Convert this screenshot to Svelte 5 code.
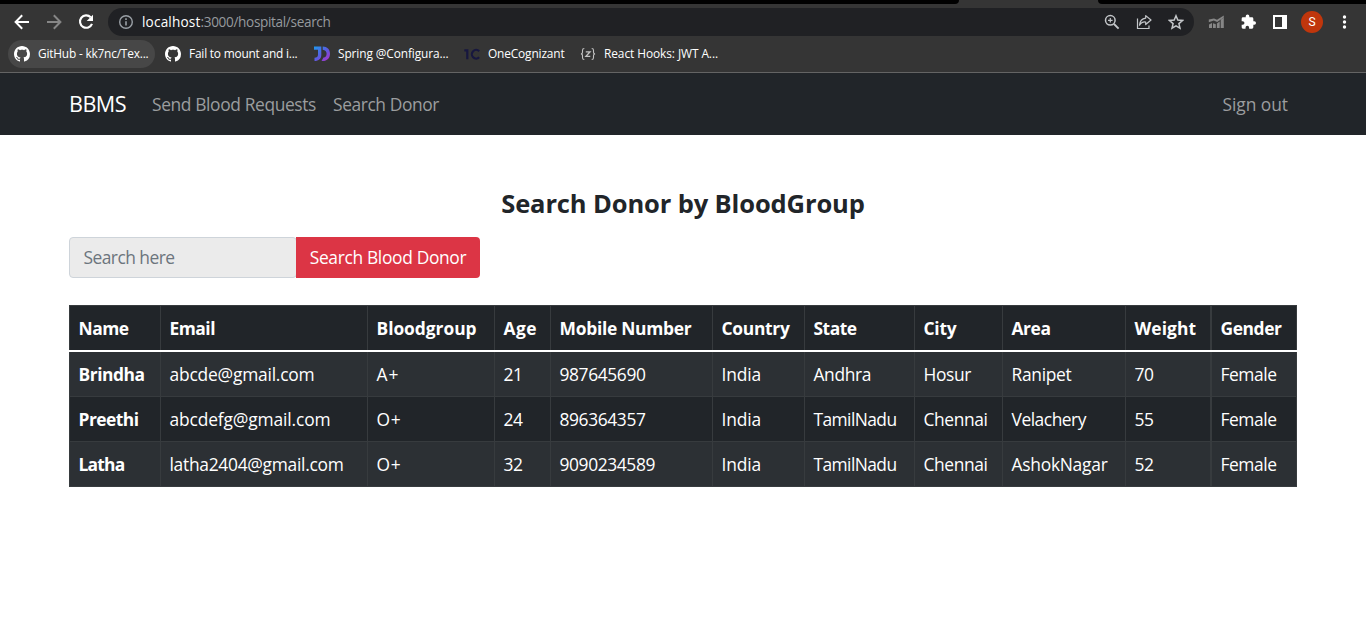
<script>
  // Spreads a label over a given advance width through its letter spacing.
  function fit(node, width) {
    const natural = node.getBoundingClientRect().width;
    node.style.letterSpacing = `${(width - natural) / node.textContent.length}px`;
  }

  const bookmarks = [
    { icon: 'github', label: 'GitHub - kk7nc/Tex...', text: 110.5, width: 147, active: true },
    { icon: 'github', label: 'Fail to mount and i...', text: 108.5, width: 145 },
    { icon: 'jd', label: 'Spring @Configura...', text: 110.5, width: 146 },
    { icon: 'one', label: 'OneCognizant', text: 76.5, width: 112 },
    { icon: 'braces', label: 'React Hooks: JWT A...', text: 114, width: 152 },
  ];

  const columns = [
    { label: 'Name', text: 50, width: 92 },
    { label: 'Email', text: 45.5, width: 207 },
    { label: 'Bloodgroup', text: 100, width: 127 },
    { label: 'Age', text: 33.5, width: 56 },
    { label: 'Mobile Number', text: 132, width: 162 },
    { label: 'Country', text: 68, width: 92 },
    { label: 'State', text: 43, width: 110 },
    { label: 'City', text: 33, width: 88 },
    { label: 'Area', text: 39, width: 123 },
    { label: 'Weight', text: 61.5, width: 86 },
    { label: 'Gender', text: 61, width: 85 },
  ];

  const donors = [
    [['Brindha', 66], ['abcde@gmail.com', 145], ['A+', 23], ['21', 19], ['987645690', 86], ['India', 39.5], ['Andhra', 57.5], ['Hosur', 47.5], ['Ranipet', 60], ['70', 19], ['Female', 56]],
    [['Preethi', 60], ['abcdefg@gmail.com', 161], ['O+', 25], ['24', 19], ['896364357', 86], ['India', 39.5], ['TamilNadu', 83], ['Chennai', 64], ['Velachery', 74.5], ['55', 19], ['Female', 56]],
    [['Latha', 46], ['latha2404@gmail.com', 174], ['O+', 25], ['32', 19], ['9090234589', 95.5], ['India', 39.5], ['TamilNadu', 83], ['Chennai', 64], ['AshokNagar', 96], ['52', 19], ['Female', 56]],
  ];
</script>

<div class="browser">
  <div class="tabstrip"><i class="left"></i><i class="right"></i></div>
  <div class="toolbar">
    <div class="nav-buttons">
      <svg width="16" height="16" viewBox="0 0 16 16" fill="none" stroke="#fff" stroke-width="2"><path d="M15 8H2.2M8.2 1.3L1.6 8l6.6 6.7" /></svg>
      <svg width="16" height="16" viewBox="0 0 16 16" fill="none" stroke="#868686" stroke-width="2"><path d="M1 8h12.8M7.8 1.3L14.4 8l-6.6 6.7" /></svg>
      <svg width="16" height="16" viewBox="0 0 16 16"><path d="M12.7 3.3A6.2 6.2 0 1 0 14 9.8" fill="none" stroke="#fff" stroke-width="2.1" /><path d="M15 .8v6.3H8.7z" fill="#fff" /></svg>
    </div>
    <div class="omnibox">
      <svg width="16" height="16" viewBox="0 0 16 16" fill="none" stroke="#9aa0a6" stroke-width="1.4"><circle cx="8" cy="8" r="6.3" /><path d="M8 7.2v4.2M8 4.3v1.6" stroke-width="1.6" /></svg>
      <div class="url"><span class="host" use:fit={58.5}>localhost</span><span use:fit={130}>:3000/hospital/search</span></div>
      <div class="page-actions">
        <svg width="16" height="16" viewBox="0 0 16 16" fill="none" stroke="#c4c7ca" stroke-width="1.5"><circle cx="6.3" cy="6.3" r="4.8" /><path d="M10 10l4.6 4.6" stroke-width="1.9" /><path d="M6.3 4v4.6M4 6.3h4.6" stroke-width="1.2" /></svg>
        <svg width="16" height="16" viewBox="0 0 16 16" fill="none" stroke="#c4c7ca" stroke-width="1.2"><path d="M1.500 4.500v10h11.500V11.600" /><path d="M9.700 1.600L15 6l-5.300 4.500V8C7 7.800 4.800 8.800 3.500 11.200 3.800 7.400 6 4.600 9.700 4.100z" stroke-linejoin="round" /></svg>
        <svg width="16" height="16" viewBox="0 0 16 16" fill="none" stroke="#c4c7ca" stroke-width="1.5"><path d="M8 1.8l1.8 4.3 4.7.4-3.6 3.1 1.1 4.6L8 11.8l-4 2.4 1.1-4.6-3.6-3.1 4.7-.4z" /></svg>
      </div>
    </div>
    <div class="extensions">
      <svg width="16" height="16" viewBox="0 0 16 16" fill="#868686"><path d="M1 10.500l3-1.500v5H1zM5 9.300l2.800 1V14H5zM8.900 9.500l2.800-2V14H8.900zM12.700 5.800L15.800 3.500V14h-3.100z" /><path d="M.8 8.300V5.600L6 4.400l3 1.400 6.800-4.400v2L9.200 8 5.800 6.600z" /></svg>
      <svg width="16" height="16" viewBox="0 0 24 24" fill="#fff"><path d="M21.5 11H20V7a2 2 0 0 0-2-2h-4V3.500a2.700 2.700 0 0 0-5.400 0V5H4.500a2 2 0 0 0-2 2v3.800H4a2.700 2.700 0 0 1 0 5.400H2.500V20a2 2 0 0 0 2 2h3.800v-1.500a2.700 2.700 0 0 1 5.400 0V22H18a2 2 0 0 0 2-2v-4h1.500a2.500 2.500 0 0 0 0-5z" /></svg>
      <svg width="16" height="16" viewBox="0 0 16 16"><path fill="#fff" fill-rule="evenodd" d="M1 1h14v14H1zM3 3v10h7V3z" /></svg>
      <span class="avatar">S</span>
      <svg width="16" height="16" viewBox="0 0 16 16" fill="#fff"><circle cx="8.500" cy="3" r="1.700" /><circle cx="8.500" cy="8" r="1.700" /><circle cx="8.500" cy="13" r="1.700" /></svg>
    </div>
  </div>
  <div class="bookmarks">
    {#each bookmarks as b}
      <div class="bookmark" class:active={b.active} style:width="{b.width}px">
        {#if b.icon === 'github'}
          <svg width="16" height="16" viewBox="0 0 16 16" fill="#fff"><path d="M8 0C3.580 0 0 3.580 0 8c0 3.540 2.290 6.530 5.470 7.590.4.070.550-.170.550-.380 0-.190-.010-.820-.010-1.490-2.010.370-2.530-.490-2.690-.940-.090-.230-.480-.940-.820-1.130-.280-.150-.680-.520-.010-.530.630-.010 1.080.580 1.230.820.720 1.210 1.870.870 2.330.660.070-.520.280-.870.510-1.070-1.780-.2-3.640-.890-3.640-3.950 0-.870.310-1.590.820-2.150-.080-.2-.360-1.020.080-2.120 0 0 .670-.210 2.200.820.640-.180 1.320-.270 2-.270s1.360.090 2 .270c1.530-1.040 2.200-.820 2.200-.820.440 1.100.160 1.920.080 2.120.510.560.820 1.270.820 2.150 0 3.070-1.870 3.750-3.650 3.950.290.250.540.730.540 1.480 0 1.070-.010 1.930-.010 2.200 0 .210.150.460.550.380A8.010 8.010 0 0 0 16 8c0-4.420-3.580-8-8-8z" /></svg>
        {:else if b.icon === 'jd'}
          <svg width="16" height="16" viewBox="0 0 16 16">
            <defs><linearGradient id="jd" x1="0" y1="0" x2="1" y2="1"><stop offset="0" stop-color="#1d9bf0" /><stop offset=".5" stop-color="#5a5ce0" /><stop offset="1" stop-color="#b32fc4" /></linearGradient></defs>
            <path fill="url(#jd)" d="M0 .5h7.300v8.500c0 3.500-2.500 6-6.800 6v-3.200c2.300 0 3.500-1 3.500-3V3.700H0zM8.700.5c4.500 0 7.300 3 7.300 7.200S13.200 15 8.700 15H7.500l2-3.400c2-.3 3.100-1.700 3.100-3.900s-1.300-3.700-3.900-3.900z" />
          </svg>
        {:else if b.icon === 'one'}
          <svg width="16" height="16" viewBox="0 0 16 16" fill="none" stroke="#17173f" stroke-width="2.200"><path d="M.3 4.300h3V13.200" /><path d="M15.200 5.200A4.300 4.300 0 1 0 15.200 11.300" /></svg>
        {:else}
          <svg width="16" height="16" viewBox="0 0 16 16" fill="none" stroke="#c2c2c2" stroke-width="1.100"><path d="M4.300 2.500C2.700 2.500 2.500 3.200 2.500 4.300v2c0 1-.5 1.700-1.600 1.700 1.100 0 1.600.7 1.600 1.700v2c0 1.100.2 1.800 1.800 1.800M11.700 2.500c1.600 0 1.800.7 1.800 1.800v2c0 1 .5 1.700 1.600 1.700-1.100 0-1.600.7-1.600 1.700v2c0 1.100-.2 1.800-1.800 1.800" /><path d="M5.800 5.800h4.300l-4.200 4.600h4.400" stroke-width="1.300" /></svg>
        {/if}
        <span use:fit={b.text}>{b.label}</span>
      </div>
    {/each}
  </div>
</div>

<nav class="navbar">
  <a class="brand" href="#home"><span use:fit={57}>BBMS</span></a>
  <a class="requests" href="#requests"><span use:fit={164}>Send Blood Requests</span></a>
  <a class="search" href="#search"><span use:fit={106}>Search Donor</span></a>
  <a class="signout" href="#signout"><span use:fit={65.5}>Sign out</span></a>
</nav>

<main>
  <h1><span use:fit={363.5}>Search Donor by BloodGroup</span></h1>
  <div class="search-group">
    <div class="field"><span use:fit={91}>Search here</span></div>
    <button><span use:fit={156.5}>Search Blood Donor</span></button>
  </div>
  <table>
    <colgroup>{#each columns as c}<col style:width="{c.width}px" />{/each}</colgroup>
    <thead>
      <tr>{#each columns as c}<th><span use:fit={c.text}>{c.label}</span></th>{/each}</tr>
      <tr class="rule"><td colspan="11"></td></tr>
    </thead>
    <tbody>
      {#each donors as donor}
        <tr>{#each donor as [value, width], i}
          {#if i === 0}<th><span use:fit={width}>{value}</span></th>{:else}<td><span use:fit={width}>{value}</span></td>{/if}
        {/each}</tr>
      {/each}
    </tbody>
  </table>
</main>

<style>
  :global(body) {
    background: #fff;
    color: #212529;
    font: 17.400px/26px 'Open Sans', 'Noto Sans', sans-serif;
    overflow: hidden;
  }
  span { white-space: nowrap; }
  svg { display: block; flex: none; }

  .browser { height: 73px; box-sizing: border-box; background: #353535; border-bottom: 1px solid #646464; }
  .tabstrip { height: 4px; display: flex; justify-content: space-between; }
  .tabstrip i { background: #000; }
  .tabstrip .left { width: 959px; border-bottom-right-radius: 5px; }
  .tabstrip .right { width: 268px; border-bottom-left-radius: 5px; }
  .toolbar { height: 36px; display: flex; align-items: center; }
  .nav-buttons { width: 94px; padding-left: 14px; box-sizing: border-box; display: flex; gap: 16px; }
  .omnibox {
    width: 1086px; height: 28px; box-sizing: border-box; margin-left: 14px; padding: 0 10px;
    display: flex; align-items: center; border-radius: 14px; background: #202124;
  }
  .url { margin-left: 8px; font-size: 13.600px; line-height: 20px; color: #969a9e; display: flex; }
  .host { color: #fff; }
  .page-actions { margin-left: auto; display: flex; gap: 16px; }
  .extensions { margin-left: 14px; display: flex; align-items: center; gap: 16px; }
  .avatar {
    width: 22px; height: 22px; margin: 0 -3px; border-radius: 50%; background: #c0360c; color: #fff;
    font: 12px/22px Roboto, sans-serif; text-align: center;
  }
  .bookmarks { height: 28px; padding-left: 8px; display: flex; gap: 4px; }
  .bookmark {
    box-sizing: border-box; padding-left: 6px; display: flex; align-items: center; gap: 8px;
    border-radius: 14px; color: #fff; font-size: 11.900px; line-height: 16px;
  }
  .bookmark span { padding-bottom: 2px; }
  .bookmark.active { background: #474747; }

  .navbar { height: 62px; padding: 0 78px 1px 69px; box-sizing: border-box; display: flex; align-items: center; background: #212529; }
  .navbar a { color: #9b9d9f; text-decoration: none; }
  .navbar .brand { color: #fff; font-size: 21.600px; }
  .requests { margin-left: 26px; }
  .search { margin-left: 17px; }
  .signout { margin-left: auto; }

  main { width: 1228px; margin: 0 auto; padding-top: 51px; }
  h1 { margin: 0; font-size: 25.500px; line-height: 34px; font-weight: 700; text-align: center; }
  .search-group { margin-top: 17px; height: 41px; display: flex; }
  .field {
    width: 228px; box-sizing: border-box; border: 1px solid #ced4da; border-radius: 4px; padding: 6px 13.500px;
    background: #ebebeb; color: #6c757d;
  }
  button {
    width: 184px; margin-left: -1px; padding: 0 0 2px; border: 0; border-radius: 0 4px 4px 0;
    background: #dc3545; color: #fff; font: inherit;
  }
  table {
    width: 1228px; margin-top: 27px; table-layout: fixed; border-spacing: 0; box-sizing: border-box;
    color: #fff; text-align: left;
  }
  th, td {
    box-sizing: border-box; height: 45px; padding: 0 0 1px 8.500px; border: solid #373b3e; border-width: 0 1px 1px 0;
    background: #212529; line-height: 26px;
  }
  th:first-child { border-left-width: 1px; }
  th:nth-child(10), td:nth-child(10) { border-right-width: 2px; }
  thead th { border-width: 1px 1px 0 0; }
  thead .rule td { height: 2px; padding: 0; border: 0; background: #fff; line-height: 0; }
  tbody tr:nth-child(odd) > * { background: #2c3034; }
</style>
